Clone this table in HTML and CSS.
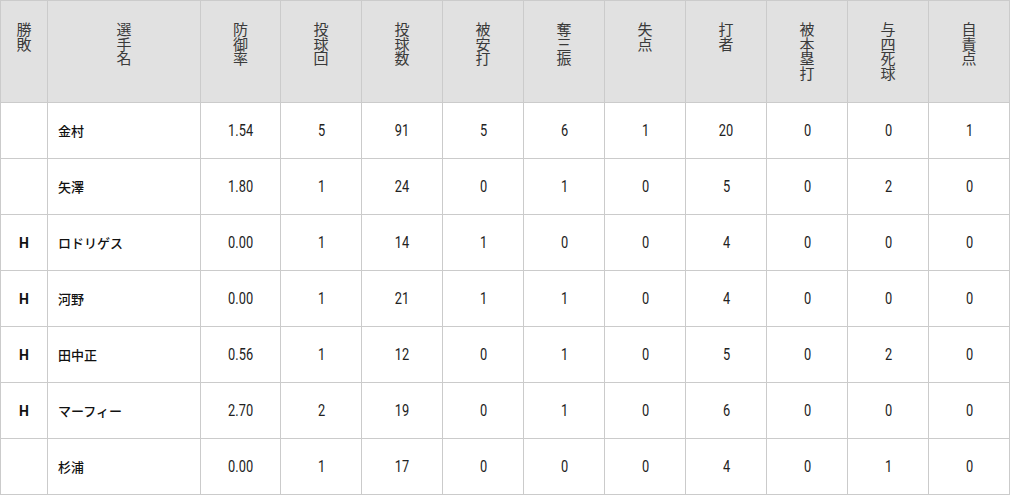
FILE: index.html
```html
<!DOCTYPE html>
<html lang="ja">
<head>
<meta charset="utf-8">
<title>投手成績</title>
<link rel="stylesheet" href="styles.css">
</head>
<body>
<table class="stats">
  <colgroup>
    <col class="c-wl"><col class="c-name"><col class="c-era">
    <col class="c-n"><col class="c-n"><col class="c-n"><col class="c-n"><col class="c-n"><col class="c-n"><col class="c-n"><col class="c-n"><col class="c-n">
  </colgroup>
  <thead>
    <tr>
      <th><span class="v">勝敗</span></th>
      <th><span class="v">選手名</span></th>
      <th><span class="v">防御率</span></th>
      <th><span class="v">投球回</span></th>
      <th><span class="v">投球数</span></th>
      <th><span class="v">被安打</span></th>
      <th><span class="v">奪三振</span></th>
      <th><span class="v">失点</span></th>
      <th><span class="v">打者</span></th>
      <th><span class="v">被本塁打</span></th>
      <th><span class="v">与四死球</span></th>
      <th><span class="v">自責点</span></th>
    </tr>
  </thead>
  <tbody>
    <tr><td class="wl"></td><td class="name">金村</td><td class="num"><span>1.54</span></td><td class="num"><span>5</span></td><td class="num"><span>91</span></td><td class="num"><span>5</span></td><td class="num"><span>6</span></td><td class="num"><span>1</span></td><td class="num"><span>20</span></td><td class="num"><span>0</span></td><td class="num"><span>0</span></td><td class="num"><span>1</span></td></tr>
    <tr><td class="wl"></td><td class="name">矢澤</td><td class="num"><span>1.80</span></td><td class="num"><span>1</span></td><td class="num"><span>24</span></td><td class="num"><span>0</span></td><td class="num"><span>1</span></td><td class="num"><span>0</span></td><td class="num"><span>5</span></td><td class="num"><span>0</span></td><td class="num"><span>2</span></td><td class="num"><span>0</span></td></tr>
    <tr><td class="wl">H</td><td class="name">ロドリゲス</td><td class="num"><span>0.00</span></td><td class="num"><span>1</span></td><td class="num"><span>14</span></td><td class="num"><span>1</span></td><td class="num"><span>0</span></td><td class="num"><span>0</span></td><td class="num"><span>4</span></td><td class="num"><span>0</span></td><td class="num"><span>0</span></td><td class="num"><span>0</span></td></tr>
    <tr><td class="wl">H</td><td class="name">河野</td><td class="num"><span>0.00</span></td><td class="num"><span>1</span></td><td class="num"><span>21</span></td><td class="num"><span>1</span></td><td class="num"><span>1</span></td><td class="num"><span>0</span></td><td class="num"><span>4</span></td><td class="num"><span>0</span></td><td class="num"><span>0</span></td><td class="num"><span>0</span></td></tr>
    <tr><td class="wl">H</td><td class="name">田中正</td><td class="num"><span>0.56</span></td><td class="num"><span>1</span></td><td class="num"><span>12</span></td><td class="num"><span>0</span></td><td class="num"><span>1</span></td><td class="num"><span>0</span></td><td class="num"><span>5</span></td><td class="num"><span>0</span></td><td class="num"><span>2</span></td><td class="num"><span>0</span></td></tr>
    <tr><td class="wl">H</td><td class="name">マーフィー</td><td class="num"><span>2.70</span></td><td class="num"><span>2</span></td><td class="num"><span>19</span></td><td class="num"><span>0</span></td><td class="num"><span>1</span></td><td class="num"><span>0</span></td><td class="num"><span>6</span></td><td class="num"><span>0</span></td><td class="num"><span>0</span></td><td class="num"><span>0</span></td></tr>
    <tr><td class="wl"></td><td class="name">杉浦</td><td class="num"><span>0.00</span></td><td class="num"><span>1</span></td><td class="num"><span>17</span></td><td class="num"><span>0</span></td><td class="num"><span>0</span></td><td class="num"><span>0</span></td><td class="num"><span>4</span></td><td class="num"><span>0</span></td><td class="num"><span>1</span></td><td class="num"><span>0</span></td></tr>
  </tbody>
</table>
</body>
</html>
```

FILE: styles.css
```css
html, body {
  margin: 0;
  padding: 0;
  background: #ffffff;
}

.stats {
  border-collapse: collapse;
  table-layout: fixed;
  width: 1010px;
  font-family: "Noto Sans CJK JP", "Noto Sans", sans-serif;
  color: #111;
}

.c-wl { width: 47px; }
.c-name { width: 153px; }
.c-era { width: 80px; }
.c-n { width: 81px; }

.stats th,
.stats td {
  border: 1px solid #cbcbcb;
  padding: 0;
}

.stats thead tr {
  height: 102px;
}

.stats th {
  background: #e1e1e1;
  vertical-align: top;
  text-align: center;
  font-weight: 400;
  font-size: 15px;
  line-height: 14.7px;
  color: #3a3a3a;
  padding-top: 21px;
}

.v {
  display: inline-block;
  width: 1em;
  word-break: break-all;
}

.stats tbody tr {
  height: 56px;
}

.stats td {
  vertical-align: middle;
}

.wl {
  text-align: center;
  font-family: Roboto, "Liberation Sans", sans-serif;
  font-weight: 700;
  font-size: 14px;
  color: #111;
}

.name {
  padding-left: 10px !important;
  font-size: 13px;
  font-weight: 500;
  color: #111;
}

.num {
  text-align: center;
  font-family: Roboto, "Liberation Sans", sans-serif;
  font-size: 16px;
  color: #222;
}

.num span {
  display: inline-block;
  transform: scaleX(0.8);
}
```
